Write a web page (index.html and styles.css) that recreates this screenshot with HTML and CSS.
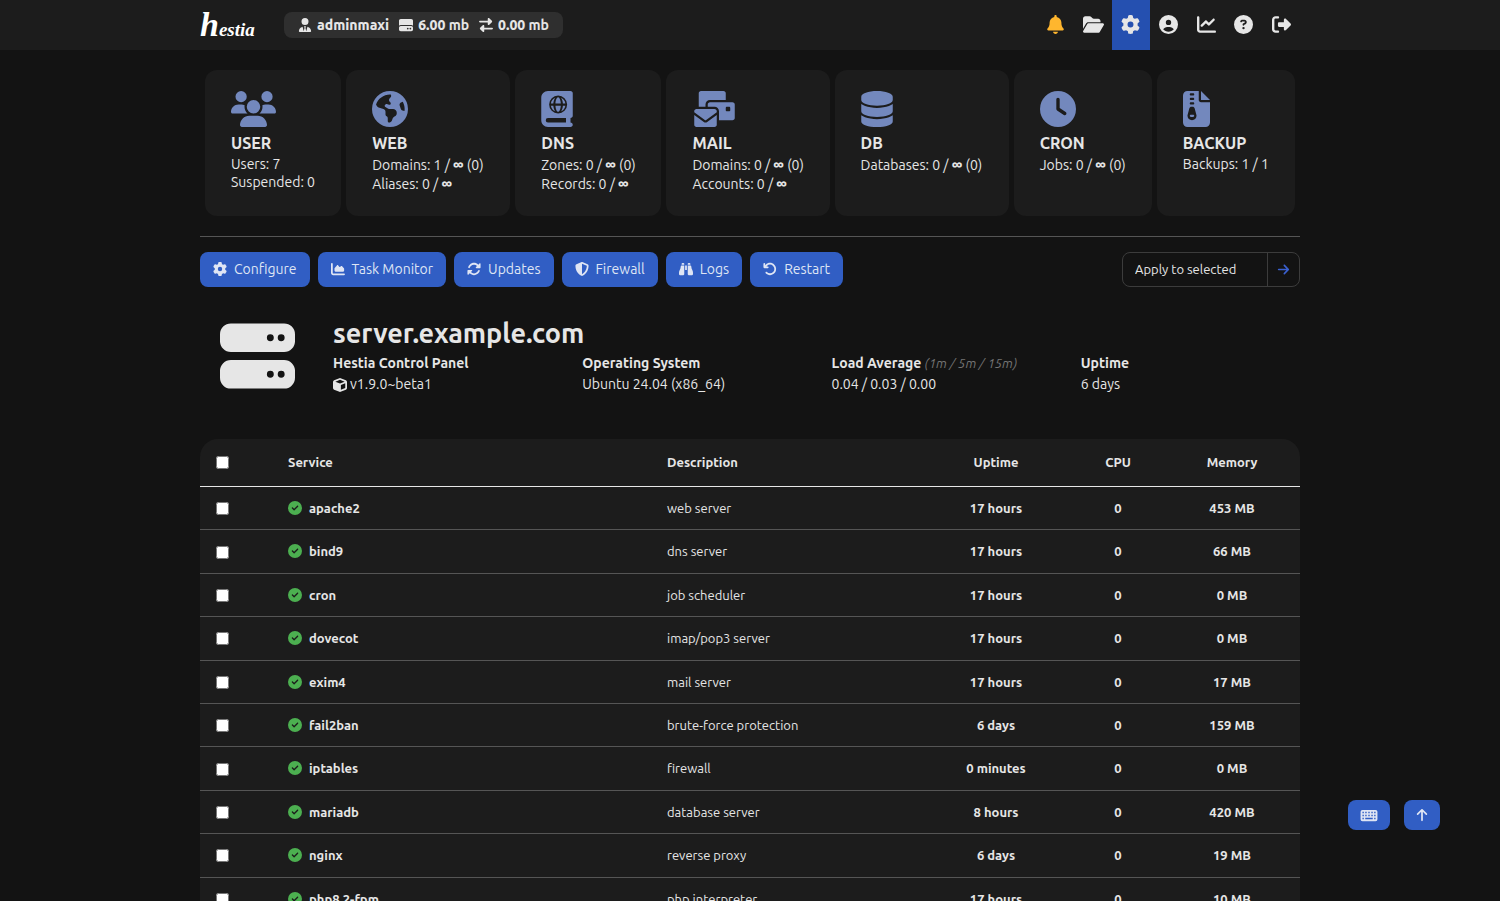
FILE: index.html
```html
<!DOCTYPE html>
<html lang="en">
<head>
<meta charset="utf-8">
<title>server.example.com - Hestia Control Panel</title>
<meta name="viewport" content="width=device-width, initial-scale=1">
<link rel="stylesheet" href="styles.css">
</head>
<body>
<svg class="sprite" aria-hidden="true">
  <symbol id="gear" viewBox="0 0 512 512"><path d="M495.900 166.600c3.200 8.700 .5 18.400-6.400 24.600l-43.300 39.400c1.100 8.300 1.700 16.800 1.700 25.400s-.6 17.100-1.700 25.400l43.300 39.400c6.900 6.200 9.600 15.900 6.400 24.600c-4.400 11.900-9.700 23.300-15.800 34.300l-4.700 8.100c-6.600 11-14 21.400-22.100 31.200c-5.900 7.200-15.700 9.600-24.500 6.800l-55.700-17.700c-13.400 10.300-28.200 18.900-44 25.400l-12.500 57.100c-2 9.100-9 16.300-18.200 17.800c-13.800 2.300-28 3.500-42.500 3.500s-28.700-1.200-42.500-3.500c-9.200-1.500-16.200-8.700-18.200-17.800l-12.500-57.100c-15.800-6.500-30.600-15.100-44-25.400L83.100 425.900c-8.800 2.800-18.600 .3-24.500-6.800c-8.100-9.800-15.500-20.200-22.100-31.200l-4.700-8.100c-6.100-11-11.400-22.400-15.800-34.300c-3.200-8.700-.5-18.400 6.400-24.600l43.300-39.400C64.600 273.100 64 264.600 64 256s.6-17.100 1.700-25.400L22.400 191.200c-6.900-6.200-9.600-15.900-6.400-24.600c4.400-11.900 9.700-23.300 15.800-34.300l4.700-8.100c6.600-11 14-21.400 22.100-31.200c5.900-7.200 15.700-9.600 24.500-6.800l55.700 17.700c13.400-10.300 28.200-18.900 44-25.400l12.500-57.100c2-9.100 9-16.300 18.200-17.800C227.300 1.200 241.500 0 256 0s28.700 1.200 42.500 3.500c9.200 1.500 16.200 8.700 18.200 17.800l12.500 57.100c15.800 6.500 30.600 15.100 44 25.400l55.700-17.700c8.800-2.800 18.600-.3 24.500 6.800c8.100 9.800 15.500 20.200 22.100 31.200l4.700 8.100c6.100 11 11.400 22.400 15.800 34.300zM256 336a80 80 0 1 0 0-160 80 80 0 1 0 0 160z"/></symbol>
  <symbol id="bell" viewBox="0 0 448 512"><path d="M224 0c-17.700 0-32 14.300-32 32V51.200C119 66 64 130.600 64 208v18.800c0 47-17.300 92.400-48.500 127.600l-7.400 8.300c-8.400 9.400-10.400 22.900-5.300 34.400S19.400 416 32 416H416c12.600 0 24-7.400 29.200-18.900s3.100-25-5.300-34.400l-7.400-8.300C401.300 319.200 384 273.900 384 226.800V208c0-77.400-55-142-128-156.800V32c0-17.700-14.300-32-32-32zm45.300 493.300c12-12 18.700-28.300 18.700-45.300H160c0 17 6.700 33.300 18.700 45.300s28.300 18.700 45.300 18.700s33.300-6.700 45.300-18.700z"/></symbol>
  <symbol id="folder" viewBox="0 0 576 512"><path d="M88.700 223.800L0 375.800V96C0 60.700 28.700 32 64 32H181.500c17 0 33.300 6.700 45.300 18.700l26.500 26.500c12 12 28.300 18.700 45.300 18.700H416c35.300 0 64 28.700 64 64v32H144c-22.800 0-43.800 12.100-55.300 31.800zm27.600 16.100C122.100 230 132.600 224 144 224H544c11.500 0 22 6.100 27.700 16.100s5.700 22.200-.1 32.100l-112 192C453.900 474 443.400 480 432 480H32c-11.500 0-22-6.100-27.700-16.100s-5.700-22.200 .1-32.100l112-192z"/></symbol>
  <symbol id="account" viewBox="0 0 512 512"><path d="M399 384.200C376.900 345.800 335.400 320 288 320H224c-47.400 0-88.900 25.800-111 64.200c35.200 39.200 86.200 63.800 143 63.800s107.800-24.700 143-63.800zM0 256a256 256 0 1 1 512 0A256 256 0 1 1 0 256zm256 16a72 72 0 1 0 0-144 72 72 0 1 0 0 144z"/></symbol>
  <symbol id="chart" viewBox="0 0 512 512"><path d="M64 64c0-17.700-14.300-32-32-32S0 46.300 0 64V400c0 44.200 35.800 80 80 80H480c17.700 0 32-14.300 32-32s-14.300-32-32-32H80c-8.800 0-16-7.200-16-16V64zm406.600 86.600c12.500-12.500 12.500-32.800 0-45.300s-32.800-12.500-45.300 0L320 210.700l-57.400-57.400c-12.500-12.500-32.800-12.500-45.300 0l-112 112c-12.500 12.500-12.500 32.800 0 45.300s32.800 12.500 45.300 0L240 221.300l57.400 57.400c12.500 12.500 32.800 12.500 45.300 0l128-128z"/></symbol>
  <symbol id="question" viewBox="0 0 512 512"><path d="M256 512A256 256 0 1 0 256 0a256 256 0 1 0 0 512zM169.800 165.300c7.900-22.300 29.100-37.300 52.800-37.300h58.300c34.900 0 63.100 28.300 63.100 63.100c0 22.600-12.100 43.500-31.700 54.800L280 264.400c-.2 13-10.900 23.600-24 23.600c-13.300 0-24-10.700-24-24V250.500c0-8.600 4.600-16.500 12.100-20.800l44.300-25.400c4.700-2.700 7.600-7.700 7.600-13.100c0-8.400-6.800-15.100-15.100-15.100H222.600c-3.400 0-6.400 2.100-7.500 5.300l-.4 1.200c-4.400 12.500-18.200 19-30.600 14.600s-19-18.200-14.600-30.600l.4-1.200zM224 352a32 32 0 1 1 64 0 32 32 0 1 1-64 0z"/></symbol>
  <symbol id="logout" viewBox="0 0 512 512"><path d="M377.900 105.900L500.700 228.700c7.200 7.200 11.300 17.100 11.300 27.300s-4.100 20.100-11.300 27.300L377.900 406.100c-6.400 6.400-15 9.900-24 9.900c-18.700 0-33.900-15.200-33.900-33.900V320H192c-17.700 0-32-14.300-32-32V224c0-17.700 14.300-32 32-32H320V129.900c0-18.700 15.200-33.900 33.900-33.900c9 0 17.600 3.600 24 9.900zM160 96H96c-17.700 0-32 14.300-32 32V384c0 17.700 14.300 32 32 32h64c17.700 0 32 14.300 32 32s-14.300 32-32 32H96c-53 0-96-43-96-96V128C0 75 43 32 96 32h64c17.700 0 32 14.300 32 32s-14.300 32-32 32z"/></symbol>
  <symbol id="usertie" viewBox="0 0 448 512"><path d="M96 128a128 128 0 1 0 256 0A128 128 0 1 0 96 128zm94.500 200.200l18.600 31L175.800 483.100l-36-146.900c-2-8.100-9.800-13.400-17.900-11.300C51.900 342.400 0 405.800 0 481.300c0 17 13.800 30.700 30.700 30.700H417.300c17 0 30.700-13.800 30.700-30.700c0-75.500-51.900-138.900-121.900-156.400c-8.100-2-15.900 3.300-17.900 11.300l-36 146.900L238.900 359.200l18.600-31c6.400-10.700-1.300-24.200-13.700-24.200H204.300c-12.400 0-20.100 13.600-13.700 24.200z"/></symbol>
  <symbol id="drive" viewBox="0 0 512 512"><path d="M0 96C0 60.700 28.700 32 64 32H448c35.300 0 64 28.700 64 64V280.400c-17-15.200-39.400-24.400-64-24.400H64c-24.600 0-47 9.200-64 24.400V96zM64 288H448c35.300 0 64 28.700 64 64v64c0 35.300-28.700 64-64 64H64c-35.300 0-64-28.700-64-64V352c0-35.300 28.700-64 64-64zM320 416a32 32 0 1 0 0-64 32 32 0 1 0 0 64zm128-32a32 32 0 1 0-64 0 32 32 0 1 0 64 0z"/></symbol>
  <symbol id="transfer" viewBox="0 0 512 512"><path d="M32 96H320V32c0-13 8-25 20-30s26-2 35 7l96 96c13 12 13 33 0 46l-96 96c-9 9-23 12-35 7s-20-17-20-30V160H32c-18 0-32-14-32-32s14-32 32-32zM480 352c18 0 32 14 32 32s-14 32-32 32H192v64c0 13-8 25-20 30s-26 2-35-7L41 407c-13-12-13-33 0-46l96-96c9-9 23-12 35-7s20 17 20 30v64H480z"/></symbol>
  <symbol id="users" viewBox="0 0 640 512"><path d="M144 0a80 80 0 1 1 0 160A80 80 0 1 1 144 0zM512 0a80 80 0 1 1 0 160A80 80 0 1 1 512 0zM0 298.700C0 239.800 47.800 192 106.700 192h42.700c15.900 0 31 3.500 44.600 9.700c-1.300 7.200-1.900 14.700-1.900 22.300c0 38.200 16.800 72.500 43.300 96H21.300C9.600 320 0 310.400 0 298.700zM405.300 320H404.700c26.600-23.500 43.300-57.800 43.300-96c0-7.600-.7-15-1.900-22.300c13.600-6.300 28.700-9.700 44.600-9.700h42.700C592.200 192 640 239.800 640 298.700c0 11.800-9.600 21.300-21.300 21.300zM224 224a96 96 0 1 1 192 0 96 96 0 1 1-192 0zM128 485.300C128 411.700 187.700 352 261.300 352H378.700C452.300 352 512 411.700 512 485.300c0 14.700-11.900 26.700-26.700 26.700H154.700c-14.700 0-26.700-11.900-26.700-26.700z"/></symbol>
  <symbol id="globe" viewBox="0 0 512 512"><path d="M57.700 193l9.400 16.400c8.300 14.500 21.900 25.200 38 29.800L163 255.700c17.200 4.900 29 20.600 29 38.500v39.900c0 11 6.200 21 16 25.900s16 14.900 16 25.900v39c0 15.600 14.900 26.900 29.900 22.600c16.100-4.600 28.600-17.500 32.700-33.800l2.800-11.200c4.200-16.900 15.200-31.400 30.300-40l8.100-4.600c15-8.500 24.200-24.500 24.200-41.700v-8.300c0-12.700-5.100-24.900-14.100-33.900l-3.900-3.900c-9-9-21.200-14.100-33.900-14.100H257c-11.100 0-22.100-2.900-31.800-8.400l-34.500-19.700c-4.300-2.500-7.600-6.500-9.200-11.200c-3.200-9.600 1.100-20 10.200-24.500l5.900-3c6.600-3.300 14.300-3.900 21.300-1.500l23.200 7.700c8.200 2.700 17.200-.4 21.900-7.500c4.700-7 4.200-16.300-1.200-22.800l-13.600-16.300c-10-12-9.900-29.500 .3-41.300l15.700-18.300c8.800-10.300 10.200-25 3.500-36.700l-2.400-4.200c-3.500-.2-6.900-.3-10.400-.3C163.100 48 84.400 108.900 57.700 193zM464 256c0-36.800-9.600-71.400-26.400-101.500L412 164.800c-15.700 6.300-23.800 23.800-18.500 39.800l16.900 50.700c3.500 10.400 12 18.300 22.600 20.900l29.100 7.300c1.200-9 1.800-18.200 1.800-27.500zM0 256a256 256 0 1 1 512 0A256 256 0 1 1 0 256z"/></symbol>
  <symbol id="atlas" viewBox="0 0 448 512"><path fill-rule="evenodd" d="M96 0H416c18 0 32 14 32 32V352c0 18-14 32-32 32v64c18 0 32 14 32 32s-14 32-32 32H96c-53 0-96-43-96-96V96C0 43 43 0 96 0zM96 384a32 32 0 0 0 0 64H352V384zM240 64a128 128 0 1 0 0 256a128 128 0 1 0 0-256z"/><g fill="currentColor"><path d="M202 176c1-38 18-88 38-88s37 50 38 88zM202 208c1 38 18 88 38 88s37-50 38-88zM137 176c5-37 29-67 62-81c-16 23-25 51-27 81zM137 208c5 37 29 67 62 81c-16-23-25-51-27-81zM343 176c-5-37-29-67-62-81c16 23 25 51 27 81zM343 208c-5 37-29 67-62 81c16-23 25-51 27-81z"/></g></symbol>
  <symbol id="mails" viewBox="0 0 640 512"><path d="M128 0C110.300 0 96 14.300 96 32V224h96V192c0-35.300 28.700-64 64-64H480V32c0-17.700-14.300-32-32-32H128zM256 160c-17.700 0-32 14.300-32 32v32h96c35.300 0 64 28.700 64 64V416H576c17.700 0 32-14.300 32-32V192c0-17.700-14.300-32-32-32H256zm240 64h32c8.800 0 16 7.200 16 16v32c0 8.800-7.200 16-16 16H496c-8.800 0-16-7.200-16-16V240c0-8.800 7.200-16 16-16zM64 256c-17.700 0-32 14.300-32 32v13L187.100 415.900c1.400 1 3.100 1.600 4.900 1.600s3.500-.6 4.900-1.600L352 301V288c0-17.700-14.300-32-32-32H64zm288 84.800L216 441.600c-6.900 5.100-15.300 7.900-24 7.900s-17-2.800-24-7.900L32 340.800V480c0 17.700 14.300 32 32 32H320c17.700 0 32-14.300 32-32V340.800z"/></symbol>
  <symbol id="database" viewBox="0 0 448 512"><path d="M448 80v48c0 44.200-100.300 80-224 80S0 172.200 0 128V80C0 35.800 100.300 0 224 0S448 35.800 448 80zM393.200 214.700c20.800-7.400 39.900-16.900 54.800-28.600V288c0 44.200-100.300 80-224 80S0 332.200 0 288V186.100c14.900 11.800 34 21.200 54.800 28.600C99.700 230.700 159.500 240 224 240s124.300-9.300 169.200-25.300zM0 346.100c14.900 11.800 34 21.200 54.800 28.600C99.700 390.700 159.500 400 224 400s124.300-9.300 169.200-25.300c20.800-7.400 39.900-16.900 54.800-28.600V432c0 44.200-100.300 80-224 80S0 476.200 0 432V346.100z"/></symbol>
  <symbol id="clock" viewBox="0 0 512 512"><path d="M256 0a256 256 0 1 1 0 512A256 256 0 1 1 256 0zM232 120V256c0 8 4 15.500 10.700 20l96 64c11 7.400 25.900 4.400 33.300-6.700s4.400-25.900-6.700-33.300L280 243.200V120c0-13.300-10.700-24-24-24s-24 10.700-24 24z"/></symbol>
  <symbol id="zip" viewBox="0 0 384 512"><path d="M64 0C28.700 0 0 28.700 0 64V448c0 35.300 28.700 64 64 64H320c35.300 0 64-28.700 64-64V160H256c-17.700 0-32-14.300-32-32V0H64zM256 0V128H384L256 0zM96 48c0-8.800 7.200-16 16-16h32c8.800 0 16 7.200 16 16s-7.200 16-16 16H112c-8.800 0-16-7.200-16-16zm0 64c0-8.800 7.200-16 16-16h32c8.800 0 16 7.200 16 16s-7.200 16-16 16H112c-8.800 0-16-7.200-16-16zm0 64c0-8.800 7.200-16 16-16h32c8.800 0 16 7.200 16 16s-7.200 16-16 16H112c-8.800 0-16-7.200-16-16zm-6.300 71.800c3.700-14 16.400-23.800 30.900-23.800h14.800c14.500 0 27.200 9.700 30.900 23.800l23.500 88.200c1.400 5.400 2.100 10.900 2.100 16.400c0 35.200-28.800 63.700-64 63.700s-64-28.500-64-63.700c0-5.500 .7-11.100 2.100-16.400l23.500-88.200zM112 336c-8.800 0-16 7.200-16 16s7.200 16 16 16h32c8.800 0 16-7.200 16-16s-7.200-16-16-16H112z"/></symbol>
  <symbol id="area" viewBox="0 0 512 512"><path d="M64 64c0-17.700-14.300-32-32-32S0 46.300 0 64V400c0 44.200 35.800 80 80 80H480c17.700 0 32-14.300 32-32s-14.300-32-32-32H80c-8.800 0-16-7.200-16-16V64zm96 288H448c17.700 0 32-14.300 32-32V251.800c0-7.600-2.700-15-7.700-20.800l-65.800-76.800c-12.100-14.200-33.700-15-46.900-1.800l-21 21c-10 10-26.400 9.200-35.400-1.600l-39.200-47c-12.600-15.100-35.700-15.400-48.700-.6L135.900 215c-5.100 5.800-7.900 13.300-7.900 21.100v84c0 17.700 14.300 32 32 32z"/></symbol>
  <symbol id="sync" viewBox="0 0 512 512"><path d="M142.900 142.900c62.200-62.200 162.700-62.500 225.300-1L327 183c-6.900 6.900-8.900 17.200-5.200 26.200s12.500 14.800 22.200 14.800H463.500c0 0 0 0 0 0H472c13.300 0 24-10.700 24-24V72c0-9.700-5.800-18.500-14.800-22.200s-19.300-1.700-26.200 5.200L413.400 96.600c-87.600-86.500-228.700-86.200-315.800 1C73.200 122 55.600 150.700 44.800 181.400c-5.900 16.700 2.900 34.900 19.500 40.800s34.900-2.900 40.800-19.500c7.700-21.800 20.200-42.300 37.800-59.800zM16 312v7.600 .7V440c0 9.700 5.800 18.500 14.800 22.200s19.300 1.700 26.200-5.200l41.600-41.600c87.600 86.500 228.700 86.200 315.800-1c24.400-24.400 42.100-53.100 52.900-83.700c5.900-16.700-2.900-34.900-19.500-40.800s-34.900 2.900-40.800 19.500c-7.700 21.800-20.200 42.300-37.800 59.800c-62.200 62.200-162.700 62.500-225.300 1L185 329c6.900-6.900 8.900-17.200 5.200-26.200s-12.500-14.800-22.200-14.800H48.400h-.7H40c-13.300 0-24 10.700-24 24z"/></symbol>
  <symbol id="shield" viewBox="0 0 512 512"><path d="M256 0c4.600 0 9.200 1 13.400 2.900L457.700 82.800c22 9.300 38.400 31 38.300 57.200c-.5 99.200-41.300 280.700-213.600 363.200c-16.700 8-36.100 8-52.800 0C57.300 420.700 16.500 239.200 16 140c-.1-26.200 16.300-47.900 38.300-57.200L242.700 2.900C246.800 1 251.400 0 256 0zm0 66.800V444.800C394 378 431.100 230.100 432 141.400L256 66.800z"/></symbol>
  <symbol id="binoculars" viewBox="0 0 512 512"><path d="M128 32h32c18 0 32 14 32 32v32H96V64c0-18 14-32 32-32zm64 96V448c0 18-14 32-32 32H32c-18 0-32-14-32-32v-59c0-35 10-69 27-99c20-37 33-77 36-119l1-15c1-16 14-28 30-28h98zm227 0c16 0 29 12 30 28l1 15c3 42 15 82 36 119c17 30 26 64 26 99v59c0 18-14 32-32 32H352c-18 0-32-14-32-32V128h99zM320 64c0-18 14-32 32-32h32c18 0 32 14 32 32v32H320V64zM288 128V288H224V128h64z"/></symbol>
  <symbol id="undo" viewBox="0 0 512 512"><path d="M125.700 160H176c17.700 0 32 14.300 32 32s-14.300 32-32 32H48c-17.700 0-32-14.300-32-32V64c0-17.700 14.300-32 32-32s32 14.300 32 32v51.200L97.600 97.600c87.500-87.500 229.300-87.500 316.800 0s87.500 229.300 0 316.800s-229.300 87.500-316.800 0c-12.500-12.500-12.500-32.800 0-45.300s32.800-12.500 45.300 0c62.500 62.500 163.800 62.500 226.300 0s62.500-163.800 0-226.300s-163.800-62.500-226.300 0L125.700 160z"/></symbol>
  <symbol id="arrow" viewBox="0 0 448 512"><path d="M438.600 278.600c12.500-12.500 12.500-32.800 0-45.300l-160-160c-12.500-12.500-32.800-12.500-45.300 0s-12.500 32.800 0 45.300L338.800 224 32 224c-17.700 0-32 14.300-32 32s14.300 32 32 32l306.700 0L233.400 393.400c-12.500 12.500-12.500 32.800 0 45.300s32.800 12.500 45.300 0l160-160z"/></symbol>
  <symbol id="cube" viewBox="0 0 512 512"><path fill-rule="evenodd" d="M235 7q21-9 42 0L471 83q41 17 41 60V369q0 43-41 60L277 505q-21 9-42 0L41 429Q0 412 0 369V143Q0 100 41 83zM256 66L86 133l170 66 170-66zM288 433l160-63V194l-160 62z"/></symbol>
  <symbol id="check" viewBox="0 0 512 512"><path d="M256 512A256 256 0 1 0 256 0a256 256 0 1 0 0 512zM369 209L241 337c-9.400 9.400-24.600 9.400-33.900 0l-64-64c-9.400-9.400-9.400-24.600 0-33.900s24.600-9.400 33.900 0l47 47L335 175c9.400-9.400 24.600-9.400 33.900 0s9.400 24.600 0 33.900z"/></symbol>
  <symbol id="keyboard" viewBox="0 0 576 512"><path fill-rule="evenodd" d="M64 64H512q64 0 64 64V384q0 64-64 64H64q-64 0-64-64V128Q0 64 64 64zM64 128v48h48v-48zM160 128v48h48v-48zM264 128v48h48v-48zM368 128v48h48v-48zM464 128v48h48v-48zM64 232v48h48v-48zM160 232v48h48v-48zM264 232v48h48v-48zM368 232v48h48v-48zM464 232v48h48v-48zM64 336v48h48v-48zM160 336v48h256v-48zM464 336v48h48v-48z"/></symbol>
</svg>

<header class="top-bar">
  <div class="container top-bar-inner">
    <a class="logo" href="#" aria-label="Hestia"><span class="logo-initial">h</span>estia</a>
    <div class="usage">
      <span class="usage-item"><svg class="icon"><use href="#usertie"/></svg><b>adminmaxi</b></span>
      <span class="usage-item"><svg class="icon"><use href="#drive"/></svg><span><b>6.00</b> mb</span></span>
      <span class="usage-item"><svg class="icon"><use href="#transfer"/></svg><span><b>0.00</b> mb</span></span>
    </div>
    <nav class="top-nav">
      <button class="nav-link bell" type="button" aria-label="Notifications"><svg class="icon"><use href="#bell"/></svg></button>
      <a class="nav-link folder" href="#" aria-label="File manager"><svg class="icon"><use href="#folder"/></svg></a>
      <a class="nav-link active" href="#" aria-label="Server settings"><svg class="icon"><use href="#gear"/></svg></a>
      <a class="nav-link" href="#" aria-label="Account"><svg class="icon"><use href="#account"/></svg></a>
      <a class="nav-link" href="#" aria-label="Statistics"><svg class="icon"><use href="#chart"/></svg></a>
      <a class="nav-link" href="#" aria-label="Help"><svg class="icon"><use href="#question"/></svg></a>
      <a class="nav-link" href="#" aria-label="Log out"><svg class="icon"><use href="#logout"/></svg></a>
    </nav>
  </div>
</header>

<main class="container">
  <nav class="cards">
    <a class="card" href="#"><svg class="card-icon wide"><use href="#users"/></svg><h2>USER</h2><p>Users: 7</p><p>Suspended: 0</p></a>
    <a class="card" href="#"><svg class="card-icon"><use href="#globe"/></svg><h2>WEB</h2><p>Domains: 1 / <b>∞</b> (0)</p><p>Aliases: 0 / <b>∞</b></p></a>
    <a class="card" href="#"><svg class="card-icon narrow"><use href="#atlas"/></svg><h2>DNS</h2><p>Zones: 0 / <b>∞</b> (0)</p><p>Records: 0 / <b>∞</b></p></a>
    <a class="card" href="#"><svg class="card-icon wide"><use href="#mails"/></svg><h2>MAIL</h2><p>Domains: 0 / <b>∞</b> (0)</p><p>Accounts: 0 / <b>∞</b></p></a>
    <a class="card" href="#"><svg class="card-icon narrow"><use href="#database"/></svg><h2>DB</h2><p>Databases: 0 / <b>∞</b> (0)</p></a>
    <a class="card" href="#"><svg class="card-icon"><use href="#clock"/></svg><h2>CRON</h2><p>Jobs: 0 / <b>∞</b> (0)</p></a>
    <a class="card" href="#"><svg class="card-icon slim"><use href="#zip"/></svg><h2>BACKUP</h2><p>Backups: 1 / 1</p></a>
  </nav>

  <div class="toolbar">
    <div class="toolbar-buttons">
      <a class="button" href="#"><svg class="icon"><use href="#gear"/></svg>Configure</a>
      <a class="button" href="#"><svg class="icon"><use href="#area"/></svg>Task Monitor</a>
      <a class="button" href="#"><svg class="icon"><use href="#sync"/></svg>Updates</a>
      <a class="button" href="#"><svg class="icon"><use href="#shield"/></svg>Firewall</a>
      <a class="button" href="#"><svg class="icon"><use href="#binoculars"/></svg>Logs</a>
      <button class="button" type="button"><svg class="icon"><use href="#undo"/></svg>Restart</button>
    </div>
    <form class="bulk">
      <select class="bulk-select" aria-label="Apply to selected"><option>Apply to selected</option></select>
      <button class="bulk-submit" type="button" aria-label="Apply"><svg class="icon"><use href="#arrow"/></svg></button>
    </form>
  </div>

  <section class="server">
    <svg class="server-icon" viewBox="0 0 76 66"><path fill-rule="evenodd" d="M11 0H65a11 11 0 0 1 11 11V18a11 11 0 0 1-11 11H11A11 11 0 0 1 0 18V11A11 11 0 0 1 11 0zM51 11a3.500 3.500 0 1 0 0 7a3.500 3.500 0 1 0 0-7zM62 11a3.500 3.500 0 1 0 0 7a3.500 3.500 0 1 0 0-7zM11 37H65a11 11 0 0 1 11 11V55a11 11 0 0 1-11 11H11A11 11 0 0 1 0 55V48A11 11 0 0 1 11 37zM51 48a3.500 3.500 0 1 0 0 7a3.500 3.500 0 1 0 0-7zM62 48a3.500 3.500 0 1 0 0 7a3.500 3.500 0 1 0 0-7z"/></svg>
    <div class="server-info">
      <h1>server.example.com</h1>
      <ul class="facts">
        <li><b>Hestia Control Panel</b><span class="version"><svg class="icon"><use href="#cube"/></svg>v1.9.0~beta1</span></li>
        <li><b>Operating System</b><span>Ubuntu 24.04 (x86_64)</span></li>
        <li><span><b>Load Average</b> <i>(1m / 5m / 15m)</i></span><span>0.04 / 0.03 / 0.00</span></li>
        <li><b>Uptime</b><span>6 days</span></li>
      </ul>
    </div>
  </section>

  <table class="services">
    <colgroup><col class="col-check"><col class="col-name"><col class="col-text"><col class="col-uptime"><col class="col-cpu"><col class="col-memory"></colgroup>
    <thead>
      <tr><th><input type="checkbox" aria-label="Select all"></th><th>Service</th><th>Description</th><th class="num">Uptime</th><th class="num">CPU</th><th class="num">Memory</th></tr>
    </thead>
    <tbody>
      <tr><td><input type="checkbox" aria-label="Select apache2"></td><th><svg class="icon"><use href="#check"/></svg>apache2</th><td>web server</td><td class="num">17 hours</td><td class="num">0</td><td class="num">453 MB</td></tr>
      <tr><td><input type="checkbox" aria-label="Select bind9"></td><th><svg class="icon"><use href="#check"/></svg>bind9</th><td>dns server</td><td class="num">17 hours</td><td class="num">0</td><td class="num">66 MB</td></tr>
      <tr><td><input type="checkbox" aria-label="Select cron"></td><th><svg class="icon"><use href="#check"/></svg>cron</th><td>job scheduler</td><td class="num">17 hours</td><td class="num">0</td><td class="num">0 MB</td></tr>
      <tr><td><input type="checkbox" aria-label="Select dovecot"></td><th><svg class="icon"><use href="#check"/></svg>dovecot</th><td>imap/pop3 server</td><td class="num">17 hours</td><td class="num">0</td><td class="num">0 MB</td></tr>
      <tr><td><input type="checkbox" aria-label="Select exim4"></td><th><svg class="icon"><use href="#check"/></svg>exim4</th><td>mail server</td><td class="num">17 hours</td><td class="num">0</td><td class="num">17 MB</td></tr>
      <tr><td><input type="checkbox" aria-label="Select fail2ban"></td><th><svg class="icon"><use href="#check"/></svg>fail2ban</th><td>brute-force protection</td><td class="num">6 days</td><td class="num">0</td><td class="num">159 MB</td></tr>
      <tr><td><input type="checkbox" aria-label="Select iptables"></td><th><svg class="icon"><use href="#check"/></svg>iptables</th><td>firewall</td><td class="num">0 minutes</td><td class="num">0</td><td class="num">0 MB</td></tr>
      <tr><td><input type="checkbox" aria-label="Select mariadb"></td><th><svg class="icon"><use href="#check"/></svg>mariadb</th><td>database server</td><td class="num">8 hours</td><td class="num">0</td><td class="num">420 MB</td></tr>
      <tr><td><input type="checkbox" aria-label="Select nginx"></td><th><svg class="icon"><use href="#check"/></svg>nginx</th><td>reverse proxy</td><td class="num">6 days</td><td class="num">0</td><td class="num">19 MB</td></tr>
      <tr><td><input type="checkbox" aria-label="Select php8.2-fpm"></td><th><svg class="icon"><use href="#check"/></svg>php8.2-fpm</th><td>php interpreter</td><td class="num">17 hours</td><td class="num">0</td><td class="num">10 MB</td></tr>
    </tbody>
  </table>
</main>

<div class="floating">
  <button class="float-button keys" type="button" aria-label="Keyboard shortcuts"><svg class="icon"><use href="#keyboard"/></svg></button>
  <a class="float-button up" href="#" aria-label="Back to top"><svg class="icon"><use href="#arrow"/></svg></a>
</div>
</body>
</html>
```
FILE: styles.css
```css
* { box-sizing: border-box; }

html {
  background: #131313;
  scrollbar-width: none;
}

body {
  margin: 0;
  color: #e6e6e6;
  font-family: Ubuntu, "Noto Sans", sans-serif;
  font-size: 14px;
  line-height: 18px;
}

h1, h2, p, ul { margin: 0; padding: 0; }
a { color: inherit; text-decoration: none; }
button, select { font: inherit; cursor: pointer; }

.sprite { position: absolute; width: 0; height: 0; }
.icon { width: 14px; height: 14px; fill: currentColor; flex: none; }

.container { width: 100%; max-width: 1100px; margin: 0 auto; }

/* Top bar */
.top-bar { background: #1c1c1c; }
.top-bar-inner { display: flex; height: 50px; align-items: center; }

.logo {
  width: 84px;
  padding-top: 4px;
  color: #fff;
  font: italic bold 19px/36px "Liberation Serif", serif;
}
.logo-initial { font-size: 34px; }

.usage {
  display: flex;
  gap: 10px;
  height: 26px;
  padding: 0 14px;
  align-items: center;
  border-radius: 8px;
  background: #2f2f2f;
}
.usage-item { display: flex; gap: 5px; align-items: center; font-weight: 600; }

.top-nav { display: flex; width: 263px; height: 50px; margin-left: auto; }
.nav-link {
  display: flex;
  flex: 1;
  padding: 0 0 2px;
  align-items: center;
  justify-content: center;
  border: 0;
  background: none;
  color: #e6e6e6;
}
.nav-link .icon { width: 19px; height: 19px; }
.nav-link.folder .icon { width: 21px; }
.nav-link.bell { color: #ffb62e; }
.nav-link.active { background: #2550b0; }

/* Section cards */
.cards {
  display: grid;
  grid-template-columns: 136fr 164fr 146fr 163fr 174fr 138fr 138fr;
  gap: 5px;
  padding: 20px 5px;
  border-bottom: 1px solid #555;
}
.card {
  min-height: 146px;
  padding: 21px 0 20px 26px;
  border-radius: 12px;
  background: #1c1c1c;
  white-space: nowrap;
}
.card-icon { display: block; width: 36px; height: 36px; margin-bottom: 5px; fill: #7388bd; color: #7388bd; }
.card-icon.wide { width: 45px; }
.card-icon.narrow { width: 32px; }
.card-icon.slim { width: 27px; }
.card h2 { margin-bottom: 1px; font-size: 16px; line-height: 22px; font-weight: 600; }
.card b { font-size: 17px; line-height: 1; }

/* Toolbar */
.toolbar { display: flex; justify-content: space-between; margin-top: 15px; }
.toolbar-buttons { display: flex; gap: 8px; }
.button {
  display: flex;
  gap: 7px;
  height: 35px;
  padding: 0 13px 1px;
  align-items: center;
  border: 0;
  border-radius: 8px;
  background: #315ec4;
  color: #dfe5f4;
}
.bulk {
  display: flex;
  height: 35px;
  overflow: hidden;
  border: 1px solid #3c3c3c;
  border-radius: 8px;
}
.bulk-select {
  width: 144px;
  padding: 0 12px 1px;
  border: 0;
  background: none;
  color: #e6e6e6;
  font-size: 13px;
  appearance: none;
}
.bulk-submit {
  display: flex;
  width: 32px;
  padding: 0;
  align-items: center;
  justify-content: center;
  border: 0;
  border-left: 1px solid #3c3c3c;
  background: none;
  color: #3a60d0;
}
.bulk-submit .icon { width: 13px; height: 13px; }

/* Server summary */
.server { display: flex; gap: 38px; padding: 31px 0 44px 20px; }
.server-icon { flex: none; width: 75px; height: 66px; margin-top: 5px; fill: #e6e6e6; }
.server-info { flex: 1; }
.server h1 { font-size: 27px; line-height: 30px; font-weight: 600; }
.facts {
  display: grid;
  grid-template-columns: repeat(4, 1fr);
  gap: 30px;
  margin-top: 5px;
  line-height: 21px;
  list-style: none;
}
.facts li > * { display: block; white-space: nowrap; }
.facts i { color: #757575; font-size: 13px; }
.facts .version { display: flex; gap: 3px; align-items: center; }

/* Services table */
.services {
  width: 100%;
  table-layout: fixed;
  border-collapse: separate;
  border-spacing: 0;
  overflow: hidden;
  border-radius: 18px 18px 0 0;
  background: #1c1c1c;
  font-size: 13px;
  line-height: 1.8;
}
.col-check { width: 72px; }
.col-name { width: 379px; }
.col-text { width: 269px; }
.col-uptime { width: 152px; }
.col-cpu { width: 92px; }
.col-memory { width: 136px; }

.services th, .services td {
  padding: 10px 16px 9px;
  border-bottom: 1px solid #555;
  text-align: left;
  vertical-align: middle;
}
.services thead th { padding: 12px 16px; border-bottom-color: #e6e6e6; line-height: 23px; }
.services .num { padding-right: 0; padding-left: 0; font-weight: 700; text-align: center; }
.services .icon { margin-right: 7px; vertical-align: -2px; color: #4caf50; }
.services input { display: block; width: 13px; height: 13px; margin: 0; }

/* Floating shortcuts */
.floating { position: fixed; right: 60px; bottom: 71px; display: flex; gap: 14px; }
.float-button {
  display: flex;
  height: 30px;
  padding: 0 12px;
  align-items: center;
  border: 0;
  border-radius: 8px;
  background: #315ec4;
  color: #dfe5f4;
}
.keys .icon { width: 18px; height: 15px; }
.up { padding: 0 11px; }
.up .icon { transform: rotate(-90deg); }
```
